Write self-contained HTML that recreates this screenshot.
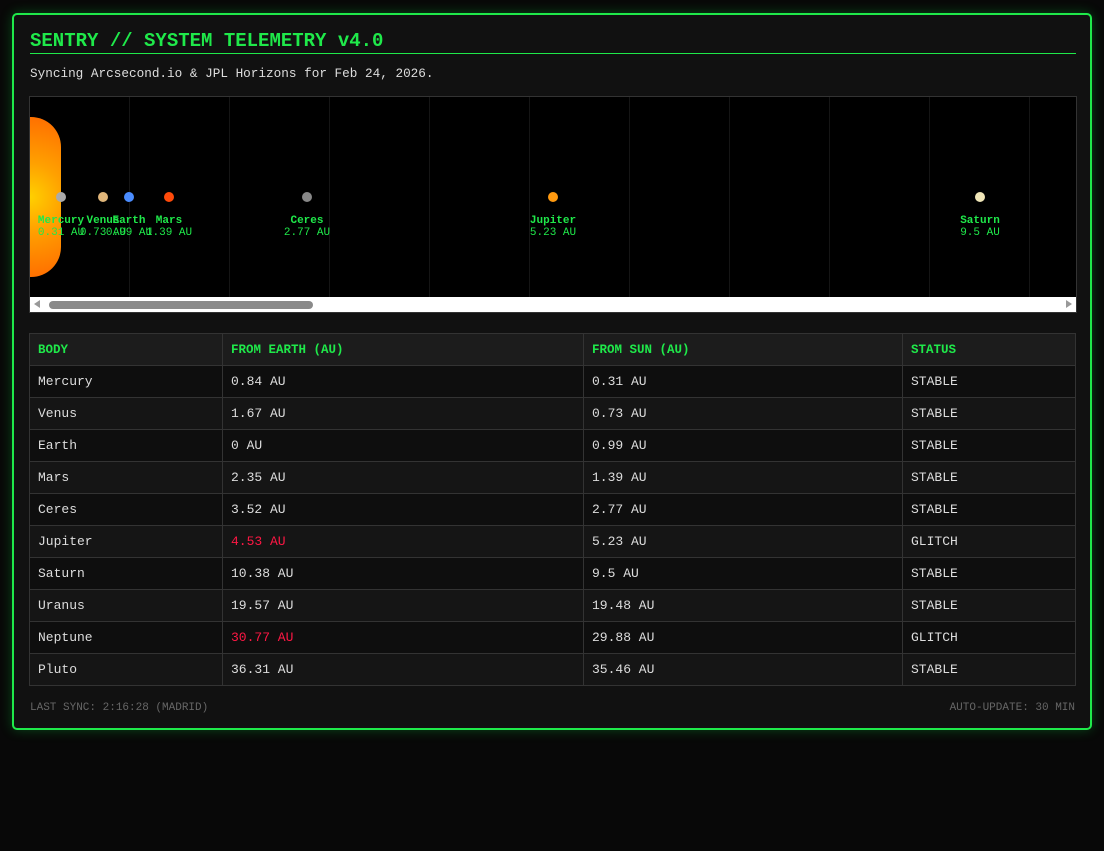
<!DOCTYPE html>
<html><head><style>
*{box-sizing:border-box;margin:0;padding:0}
body{background:#080808;width:1104px;height:851px;font-family:"Liberation Mono",monospace;color:#ddd;position:relative}
.card{position:absolute;left:12px;top:13px;width:1080px;height:717px;border:2px solid #1fe94a;border-radius:5px;background:#111;box-shadow:0 0 12px rgba(0,255,70,.25)}
h1{position:absolute;left:16px;top:14px;width:1046px;font-size:19px;font-weight:bold;color:#1fe94a;height:24px;line-height:24px}
.hl{position:absolute;left:16px;top:38px;width:1046px;height:1px;background:#1fe94a}
.sub{position:absolute;left:16px;top:51px;font-size:12.7px;color:#ddd}
.viz{position:absolute;left:15px;top:81px;width:1048px;height:217px;border:1px solid #333;background:#000;overflow:hidden}
.grid{position:absolute;top:0;height:200px;width:1px;background:#151515}
.sun{position:absolute;left:0;top:20px;width:31px;height:160px;border-radius:0 30px 30px 0;background:radial-gradient(circle at 0 50%,#ffd000 0,#ffa000 40%,#ff6a00 100%)}
.dot{position:absolute;top:95px;width:10px;height:10px;border-radius:50%}
.lb{position:absolute;top:118px;width:80px;margin-left:-40px;text-align:center;color:#1fe94a;font-size:11px;line-height:12px}
.lb b{display:block}
.sb{position:absolute;left:0;top:200px;width:1046px;height:15px;background:#fff}
.thumb{position:absolute;left:19px;top:4px;width:264px;height:8px;border-radius:4px;background:#8a8a8a}
table{position:absolute;left:15px;top:318px;width:1047px;border-collapse:collapse;font-size:13px}
td,th{border:1px solid #333;height:32px;padding:0 8px;text-align:left;white-space:nowrap}
th{background:#1c1c1c;color:#1fe94a;font-size:12.5px}
tr:nth-child(odd) td{background:#151515}
tr:nth-child(even) td{background:#0e0e0e}
.r{color:#ff1744}
.ft{position:absolute;top:687px;font-size:11px;color:#666}
</style></head><body>
<div class="card">
<h1>SENTRY // SYSTEM TELEMETRY v4.0</h1>
<div class="hl"></div>
<div class="sub">Syncing Arcsecond.io &amp; JPL Horizons for Feb 24, 2026.</div>
<div class="viz">
<div class="grid" style="left:99px"></div><div class="grid" style="left:199px"></div><div class="grid" style="left:299px"></div><div class="grid" style="left:399px"></div><div class="grid" style="left:499px"></div><div class="grid" style="left:599px"></div><div class="grid" style="left:699px"></div><div class="grid" style="left:799px"></div><div class="grid" style="left:899px"></div><div class="grid" style="left:999px"></div>
<div class="sun"></div>
<div class="dot" style="left:26px;background:#aaa"></div>
<div class="dot" style="left:68px;background:#e0b67a"></div>
<div class="dot" style="left:94px;background:#4a8cff"></div>
<div class="dot" style="left:134px;background:#ff4a0a"></div>
<div class="dot" style="left:272px;background:#888"></div>
<div class="dot" style="left:518px;background:#ff9a10"></div>
<div class="dot" style="left:945px;background:#f0e6b8"></div>
<div class="lb" style="left:31px"><b>Mercury</b>0.31 AU</div>
<div class="lb" style="left:73px"><b>Venus</b>0.73 AU</div>
<div class="lb" style="left:99px"><b>Earth</b>0.99 AU</div>
<div class="lb" style="left:139px"><b>Mars</b>1.39 AU</div>
<div class="lb" style="left:277px"><b>Ceres</b>2.77 AU</div>
<div class="lb" style="left:523px"><b>Jupiter</b>5.23 AU</div>
<div class="lb" style="left:950px"><b>Saturn</b>9.5 AU</div>
<div class="sb"><span style="position:absolute;left:4px;top:3px;width:0;height:0;border:4px solid transparent;border-right:6px solid #999;border-left:0"></span><div class="thumb"></div><span style="position:absolute;right:4px;top:3px;width:0;height:0;border:4px solid transparent;border-left:6px solid #999;border-right:0"></span></div>
</div>
<table>
<tr><th style="width:193px">BODY</th><th style="width:361px">FROM EARTH (AU)</th><th style="width:319px">FROM SUN (AU)</th><th>STATUS</th></tr>
<tr><td>Mercury</td><td>0.84 AU</td><td>0.31 AU</td><td>STABLE</td></tr>
<tr><td>Venus</td><td>1.67 AU</td><td>0.73 AU</td><td>STABLE</td></tr>
<tr><td>Earth</td><td>0 AU</td><td>0.99 AU</td><td>STABLE</td></tr>
<tr><td>Mars</td><td>2.35 AU</td><td>1.39 AU</td><td>STABLE</td></tr>
<tr><td>Ceres</td><td>3.52 AU</td><td>2.77 AU</td><td>STABLE</td></tr>
<tr><td>Jupiter</td><td class="r">4.53 AU</td><td>5.23 AU</td><td>GLITCH</td></tr>
<tr><td>Saturn</td><td>10.38 AU</td><td>9.5 AU</td><td>STABLE</td></tr>
<tr><td>Uranus</td><td>19.57 AU</td><td>19.48 AU</td><td>STABLE</td></tr>
<tr><td>Neptune</td><td class="r">30.77 AU</td><td>29.88 AU</td><td>GLITCH</td></tr>
<tr><td>Pluto</td><td>36.31 AU</td><td>35.46 AU</td><td>STABLE</td></tr>
</table>
<div class="ft" style="left:16px">LAST SYNC: 2:16:28 (MADRID)</div>
<div class="ft" style="right:15px">AUTO-UPDATE: 30 MIN</div>
</div>
</body></html>
